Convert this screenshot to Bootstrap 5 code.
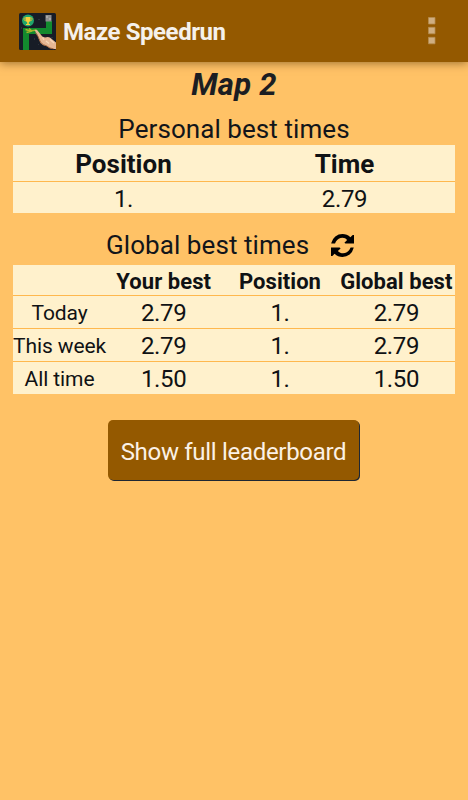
<!DOCTYPE html>
<html lang="en">
<head>
<meta charset="utf-8">
<meta name="viewport" content="width=device-width, initial-scale=1">
<title>Maze Speedrun</title>
<link href="https://cdn.jsdelivr.net/npm/bootstrap@5.3.0/dist/css/bootstrap.min.css" rel="stylesheet">
<style>
body{background:#ffc266;font-family:Roboto,"Liberation Sans",sans-serif;color:#12151a;min-height:100vh;overflow:hidden}
.app-bar{height:62px;background:#945900;box-shadow:0 1px 9px rgba(70,40,0,.55)}
.app-icon{width:37px;height:37px;margin-left:19px}
.app-title{font-size:24px;line-height:30px;font-weight:700;color:#f5f1ec;margin-left:7px;margin-top:1px;letter-spacing:-.43px}
.menu-dots{margin-right:32px;width:8px;height:28px}
.map-title{font-size:31px;line-height:36px;font-weight:700;font-style:italic;padding-top:5px;color:#1c1e22;letter-spacing:.3px}
.section-title{font-size:26px;line-height:30px;letter-spacing:.07px}
.personal-title{margin:11px 0 1px}
.global-head{padding:17px 0 5px 106px}
.refresh-icon{margin-left:22px}
.times{width:442px;margin:0 13px;background:#fff1cc;table-layout:fixed;border-collapse:separate;border-spacing:0}
.times th,.times td{padding:2px 0 0;text-align:center;vertical-align:middle;white-space:nowrap;font-size:24px;line-height:28px;color:#101214;letter-spacing:-.35px}
.times tbody tr>*{border-top:1px solid #ffb84d}
.times.personal th{font-size:26px;height:36px;letter-spacing:0}
.times.personal td{height:32px}
.times.global thead th{font-size:22px;height:30px;padding-top:3px;line-height:26px;letter-spacing:.05px}
.times.global td,.times.global tbody th{height:33px}
.times.global tbody th{font-size:21px;font-weight:400;letter-spacing:-.1px}
.times .when{width:93px}
.times.global tr>:nth-child(n+2){padding-right:1px}
.board-btn,.board-btn:hover{width:251px;height:60px;background:#945900;color:#fbf1e6;border:0;border-radius:5px;font-size:24px;letter-spacing:-.3px;padding:3px 0 0;box-shadow:1px 1px 0 #1f2733}
.board-row{padding:26px 0 0 108px}
</style>
</head>
<body class="d-flex flex-column">
<header class="app-bar d-flex align-items-center flex-shrink-0">
  <svg class="app-icon" viewBox="0 0 37 37" aria-hidden="true">
    <rect width="37" height="37" rx="1.500" fill="#171c26"/>
    <path d="M10 3h2v1h-2zM19 6h2v1h-2zM15 25h1v2h-1zM2 14h1v2H2zM32 24h2v1h-2zM19 31h1v1h-1z" fill="#2a303a"/>
    <path d="M4 37V15h23V8h6v13H10v16z" fill="#128a2e"/>
    <path d="M26.500 2h6v6.500h-6z" fill="#8f8f8f"/>
    <path d="M27 3h2v2h-2zM30 5h2v2h-2z" fill="#a8a8a8"/>
    <circle cx="9" cy="7.500" r="6" fill="#1fa56b"/>
    <path d="M6.500 4h5v3.500l-1.700 2v1.500h1.200v1H7v-1h1.200V9.500l-1.700-2z" fill="#f6ce3b"/>
    <path d="M6.500 5H5v2l2 1M11.500 5H13v2l-2 1" fill="none" stroke="#e6b82e" stroke-width=".8"/>
    <path d="M6.500 16.500l5 1.500 6-1M7.500 19.500l5.500-1.500M10 15.500l3 2.500" fill="none" stroke="#a9b62b" stroke-width="1.400"/>
    <path d="M15.600 17.300q1-1.200 2.500-.2l5.200 6.400 2.700 1q3-1.200 5.300.2L37 29.500V36h-2.500q-3.500 0-7-3-4-.5-6-3l-3-8z" fill="#e6b793"/>
    <path d="M16.500 19.500l2.500 4 2.700 6q2.500 2.800 5.800 3.300 3 2.800 7 3" fill="none" stroke="#a8693f" stroke-width="1"/>
    <path d="M23.500 24.500l1.500 2.500M27 28l3 2.500M31 26.500l4 3.500" stroke="#f6d7b8" stroke-width="1.200"/>
  </svg>
  <h1 class="app-title mb-0">Maze Speedrun</h1>
  <svg class="menu-dots ms-auto" viewBox="0 0 8 28" fill="#cfae81" stroke="#b58b4f" stroke-width=".8" aria-label="Menu"><path d="M.5.500h6.500v6.500H.5zM.5 10.300h6.500v6.500H.5zM.5 20.300h6.500v6.500H.5z"/></svg>
</header>
<main>
  <h2 class="map-title text-center mb-0">Map 2</h2>
  <h3 class="section-title personal-title text-center fw-normal">Personal best times</h3>
  <table class="times personal">
    <thead><tr><th>Position</th><th>Time</th></tr></thead>
    <tbody><tr><td>1.</td><td>2.79</td></tr></tbody>
  </table>
  <div class="global-head d-flex align-items-center">
    <h3 class="section-title fw-normal mb-0">Global best times</h3>
    <svg class="refresh-icon" width="23" height="23" viewBox="0 0 1536 1536" aria-label="Refresh"><path d="M1511 928q0 5-1 7-64 268-268 434.500T764 1536q-146 0-282.500-55T238 1324l-129 129q-19 19-45 19H0V896h576l64 64-182 182q71 66 161 102t187 36q134 0 250-65t186-179q11-17 53-117 8-23 30-23h192zM1536 64v576H960l-64-64 183-183Q969 256 768 256q-134 0-250 65T332 500q-11 17-53 117-8 23-30 23H18v-39q65-268 270-434.500T768 0q146 0 284 55.500T1297 212l130-129q19-19 45-19z"/></svg>
  </div>
  <table class="times global">
    <thead><tr><th class="when"></th><th>Your best</th><th>Position</th><th>Global best</th></tr></thead>
    <tbody>
      <tr><th>Today</th><td>2.79</td><td>1.</td><td>2.79</td></tr>
      <tr><th>This week</th><td>2.79</td><td>1.</td><td>2.79</td></tr>
      <tr><th>All time</th><td>1.50</td><td>1.</td><td>1.50</td></tr>
    </tbody>
  </table>
  <div class="board-row"><button class="btn board-btn" type="button">Show full leaderboard</button></div>
</main>
<script src="https://cdn.jsdelivr.net/npm/bootstrap@5.3.0/dist/js/bootstrap.bundle.min.js"></script>
</body>
</html>
